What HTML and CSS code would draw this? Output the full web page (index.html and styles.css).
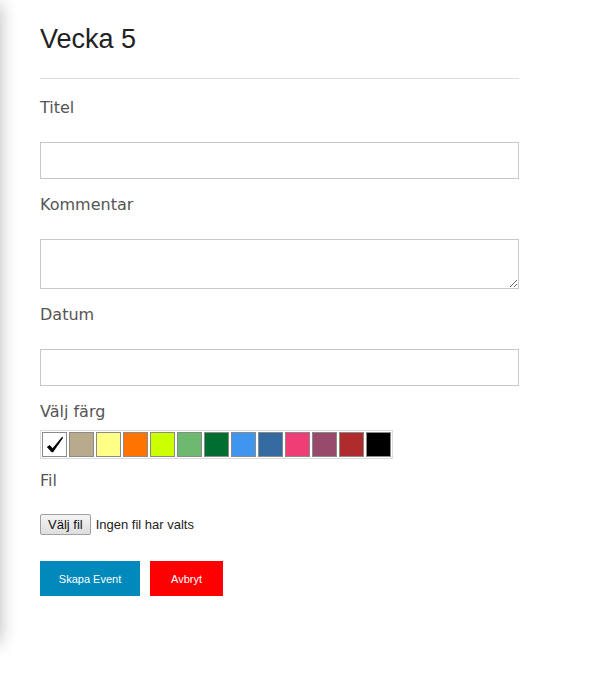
FILE: index.html
```html
<!DOCTYPE html>
<html lang="sv">
<head>
<meta charset="utf-8">
<title>Vecka 5</title>
<link rel="stylesheet" href="styles.css">
</head>
<body>
<div class="edge-shadow"></div>
<main class="panel">
  <h1 class="title">Vecka 5</h1>
  <hr class="divider">
  <form class="form">
    <label class="label label-first">Titel</label>
    <input class="field" type="text">
    <label class="label">Kommentar</label>
    <textarea class="field area"></textarea>
    <label class="label">Datum</label>
    <input class="field" type="text">
    <label class="label">Välj färg</label>
    <div class="swatches">
      <span class="swatch" style="background:#ffffff"><svg class="check" viewBox="0 0 24 24" width="23" height="23"><path d="M4 14.5 L7 12.5 L10 16 L20 4 L21 5 L10.5 20 L9 20 Z" fill="#000"/></svg></span>
      <span class="swatch" style="background:#b9aa8c"></span>
      <span class="swatch" style="background:#ffff88"></span>
      <span class="swatch" style="background:#ff7400"></span>
      <span class="swatch" style="background:#ccff00"></span>
      <span class="swatch" style="background:#6bba70"></span>
      <span class="swatch" style="background:#006e2e"></span>
      <span class="swatch" style="background:#4096ee"></span>
      <span class="swatch" style="background:#356aa0"></span>
      <span class="swatch" style="background:#ef3d75"></span>
      <span class="swatch" style="background:#984a6c"></span>
      <span class="swatch" style="background:#b02b2c"></span>
      <span class="swatch" style="background:#000000"></span>
    </div>
    <label class="label label-fil">Fil</label>
    <div class="file-row">
      <button type="button" class="file-btn">Välj fil</button>
      <span class="file-text">Ingen fil har valts</span>
    </div>
    <div class="actions">
      <button type="button" class="btn btn-create">Skapa Event</button>
      <button type="button" class="btn btn-cancel">Avbryt</button>
    </div>
  </form>
</main>
</body>
</html>
```
FILE: styles.css
```css
html, body {
  margin: 0;
  padding: 0;
  background: #fff;
}
body {
  width: 598px;
  height: 685px;
  overflow: hidden;
  position: relative;
}
.edge-shadow {
  position: absolute;
  left: -30px;
  top: 4px;
  width: 30px;
  height: 638px;
  box-shadow: 0 0 18px rgba(0,0,0,0.28);
  background: #fff;
}
.panel {
  padding: 21px 0 0 40px;
  width: 479px;
}
.title {
  margin: 0;
  font-family: "Liberation Sans", Arial, sans-serif;
  font-weight: normal;
  font-size: 27px;
  line-height: 36px;
  color: #222;
}
.divider {
  margin: 21px 0 0 0;
  border: 0;
  border-top: 1px solid #dddddd;
  height: 0;
}
.form {
  display: flex;
  flex-direction: column;
  align-items: flex-start;
}
.label {
  display: block;
  font-family: "DejaVu Sans", Verdana, sans-serif;
  font-size: 16px;
  line-height: 20px;
  color: #555;
  margin-top: 16px;
  margin-bottom: 24px;
}
.label-first { margin-top: 19px; }
.field {
  box-sizing: border-box;
  width: 479px;
  height: 37px;
  margin: 0;
  border: 1px solid #c8c8c8;
  border-radius: 0;
  background: #fff;
  font-family: "Liberation Sans", Arial, sans-serif;
  font-size: 14px;
  padding: 4px 6px;
}
.area {
  height: 50px;
  resize: vertical;
}
.swatches {
  display: flex;
  gap: 2px;
  padding: 1px;
  border: 1px solid #dddddd;
  margin-top: -16px;
}
.swatch {
  box-sizing: border-box;
  width: 25px;
  height: 25px;
  border: 1px solid #8a8a8a;
  display: flex;
  align-items: center;
  justify-content: center;
}
.check { display: block; }
.label-fil { margin-top: 12px; }
.file-row {
  display: flex;
  align-items: center;
  gap: 5px;
  margin-top: -1px;
}
.file-btn {
  font-family: "Liberation Sans", Arial, sans-serif;
  font-size: 13px;
  height: 21px;
  padding: 0 7px;
  border: 1px solid #a0a0a0;
  border-radius: 2px;
  background: linear-gradient(#f4f4f4, #dedede);
  color: #111;
}
.file-text {
  font-family: "Liberation Sans", Arial, sans-serif;
  font-size: 13px;
  color: #222;
}
.actions {
  display: flex;
  gap: 10px;
  margin-top: 26px;
}
.btn {
  height: 35px;
  border: 0;
  border-radius: 0;
  color: #fff;
  font-family: "Liberation Sans", Arial, sans-serif;
  font-size: 11px;
  padding: 0;
}
.btn-create {
  width: 100px;
  background: #0089ba;
}
.btn-cancel {
  width: 73px;
  background: #ff0000;
}
```
